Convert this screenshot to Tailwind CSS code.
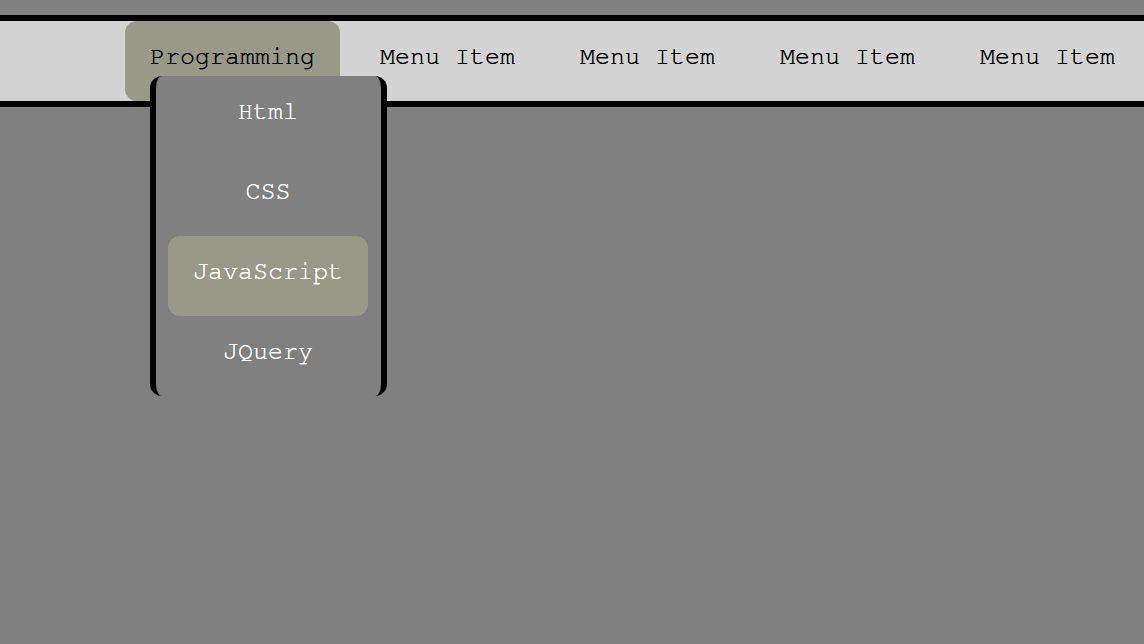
<!DOCTYPE html>
<html lang="en">
<head>
<meta charset="utf-8">
<meta name="viewport" content="width=device-width, initial-scale=1">
<title>Menu</title>
<script src="https://cdn.jsdelivr.net/npm/@tailwindcss/browser@4"></script>
</head>
<body class="min-h-screen overflow-x-hidden bg-[#808080] pt-[15px] font-['FreeMono','Courier_New','Liberation_Mono',monospace] text-[25px] leading-7 text-black [text-shadow:0_0_0_currentColor]">
<nav class="border-y-6 border-black bg-[#d3d3d3] pl-[125px]" aria-label="Main">
  <ul class="flex gap-[15px] whitespace-nowrap">
    <li class="relative">
      <a href="#" class="block h-20 rounded-xl bg-[#989986] px-[25px] pt-[22px]">Programming</a>
      <ul class="absolute top-[55px] left-[25px] w-[237px] rounded-xl border-x-6 border-black bg-[#808080] pr-[13px] pl-3 text-center text-white [text-shadow:0_0_0_currentColor]">
        <li><a href="#" class="block h-20 rounded-xl pt-[22px]">Html</a></li>
        <li><a href="#" class="block h-20 rounded-xl pt-[22px]">CSS</a></li>
        <li><a href="#" class="block h-20 rounded-xl bg-[#989986] pt-[22px]">JavaScript</a></li>
        <li><a href="#" class="block h-20 rounded-xl pt-[22px]">JQuery</a></li>
      </ul>
    </li>
    <li><a href="#" class="block h-20 rounded-xl px-[25px] pt-[22px]">Menu Item</a></li>
    <li><a href="#" class="block h-20 rounded-xl px-[25px] pt-[22px]">Menu Item</a></li>
    <li><a href="#" class="block h-20 rounded-xl px-[25px] pt-[22px]">Menu Item</a></li>
    <li><a href="#" class="block h-20 rounded-xl px-[25px] pt-[22px]">Menu Item</a></li>
  </ul>
</nav>
</body>
</html>
